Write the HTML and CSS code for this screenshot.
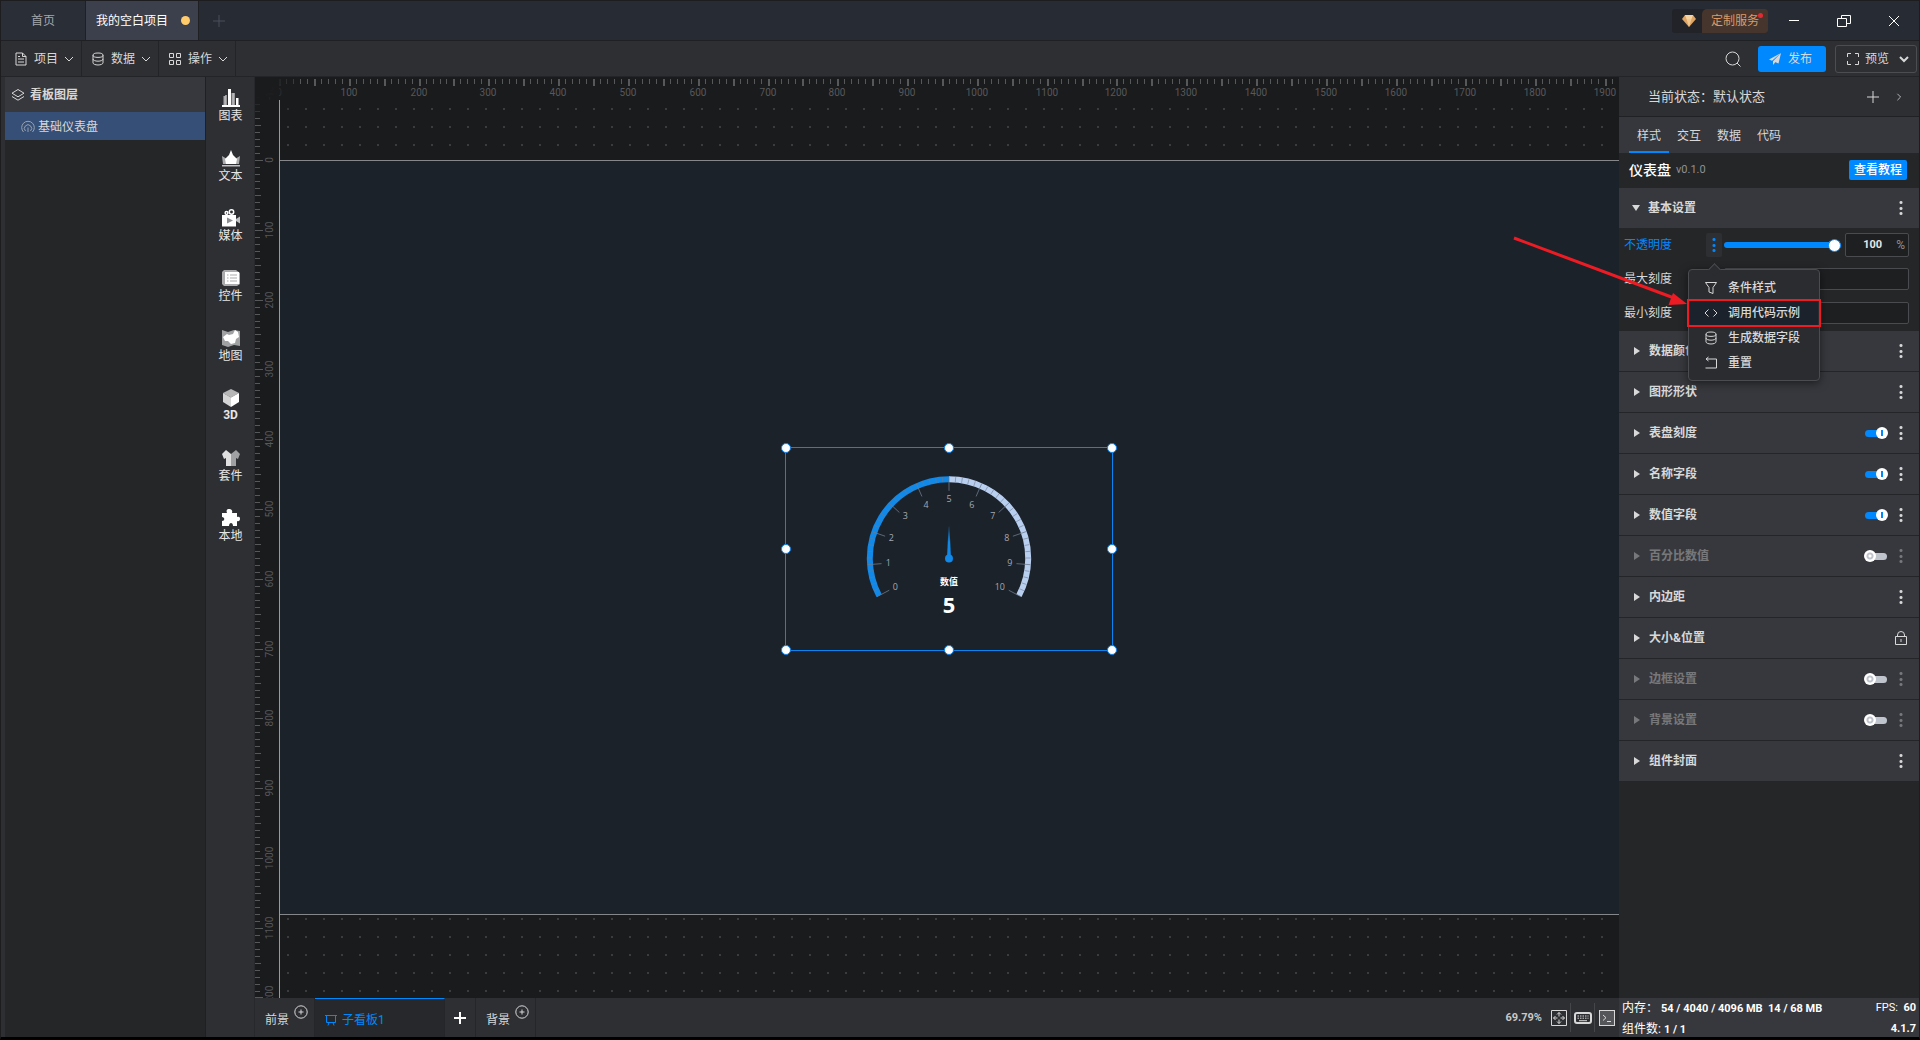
FILE: index.html
```html
<!DOCTYPE html>
<html lang="zh-CN">
  <head>
    <meta charset="utf-8" />
    <title>我的空白项目</title>
    <link rel="stylesheet" href="styles.css">
  </head>
  <body>
    <svg class="defs" aria-hidden="true">
      <symbol id="i-plus" viewBox="0 0 14 14"><path d="M7 1v12M1 7h12" /></symbol>
      <symbol id="i-down" viewBox="0 0 10 10"><path d="M1 3l4 4 4-4" /></symbol>
      <symbol id="i-right" viewBox="0 0 10 10"><path d="M3 1l4 4-4 4" /></symbol>
      <symbol id="i-db" viewBox="0 0 14 14"><ellipse cx="7" cy="3.2" rx="5" ry="2.2" /><path d="M2 3.2v7.6c0 1.2 2.2 2.2 5 2.2s5-1 5-2.2V3.2M2 7c0 1.2 2.2 2.2 5 2.2S12 8.2 12 7" /></symbol>
      <symbol id="i-addround" viewBox="0 0 14 14"><circle cx="7" cy="7" r="6.2" /><path d="M7 4.5v5M4.5 7h5" /></symbol>
    </svg>

    <div class="app">
      <header class="titlebar">
        <button class="tab">首页</button>
        <button class="tab active">我的空白项目<i class="unsaved"></i></button>
        <button class="tab-add" aria-label="新建"><svg class="icon-14"><use href="#i-plus" /></svg></button>
        <div class="spacer"></div>
        <button class="service">
          <span class="gem">
            <svg width="14" height="12" viewBox="0 0 14 12"><path d="M3 0h8l3 4-7 8-7-8z" fill="#e0a463" /><path d="M3 0h8l-1.5 4h-5z" fill="#f7d3a0" /><path d="M4.5 4h5L7 12z" fill="#f3c990" /></svg>
          </span>
          <span class="service-text">定制服务</span>
          <i class="dot"></i>
        </button>
        <button class="win" aria-label="最小化"><svg class="icon-14" viewBox="0 0 14 14"><path d="M2 6.5h10" /></svg></button>
        <button class="win" aria-label="还原"><svg class="icon-14" viewBox="0 0 14 14"><path d="M.5 4.5h9v8h-9zM4.5 4.5v-3h9v8h-4" /></svg></button>
        <button class="win" aria-label="关闭"><svg class="icon-14" viewBox="0 0 14 14"><path d="M2 2l10 10M12 2L2 12" /></svg></button>
      </header>

      <nav class="toolbar">
        <button class="tool"><svg class="icon-14" viewBox="0 0 14 14"><path d="M2 1h6.5L12 4.5V13H2zM8.5 1v3.5H12M4 7h6M4 10h6M4 4.5h2" /></svg>项目<svg class="icon-10"><use href="#i-down" /></svg></button>
        <button class="tool"><svg class="icon-14"><use href="#i-db" /></svg>数据<svg class="icon-10"><use href="#i-down" /></svg></button>
        <button class="tool"><svg class="icon-14" viewBox="0 0 14 14"><path d="M1.5 1.5h4v4h-4zM8.5 1.5h4v4h-4zM1.5 8.5h4v4h-4zM8.5 8.5h4v4h-4z" /></svg>操作<svg class="icon-10"><use href="#i-down" /></svg></button>
        <div class="spacer"></div>
        <button class="search" aria-label="搜索"><svg width="16" height="16" viewBox="0 0 16 16"><circle cx="7.5" cy="7.5" r="6.5" /><path d="M12 12l3.5 3.5" /></svg></button>
        <button class="publish"><svg width="12" height="12" viewBox="0 0 12 12"><path d="M12 0L0 6.5l3 1.3zM12 0L4 8.3V12l2-2.5zM12 0L6 9l3.5 1.5z" /></svg>发布</button>
        <button class="preview"><svg width="12" height="12" viewBox="0 0 12 12"><path d="M4 .5H.5V4M8 .5h3.5V4M.5 8v3.5H4M8 11.5h3.5V8" /></svg>预览<svg class="icon-10"><use href="#i-down" /></svg></button>
      </nav>

      <main class="workspace">
        <aside class="layers">
          <h2 class="layers-title"><svg class="icon-14" viewBox="0 0 14 14"><path d="M7 1.5l6 3.7-6 3.6-6-3.6zM1 8.5l6 3.7 6-3.7" /></svg>看板图层</h2>
          <button class="layer"><svg class="icon-14" viewBox="0 0 14 14"><path d="M2.500 12a6.300 6.300 0 1 1 9 0M4.500 11a3.600 3.600 0 1 1 5 0M7 7.500v4.500" /></svg>基础仪表盘</button>
        </aside>

        <nav class="rail">
          <button class="rail-item"><svg viewBox="0 0 18 18"><path d="M1.500 7h2v9h-2zM9.500 4h2v12h-2z" opacity=".6" /><path d="M0 16h18v2H0zM3.500 6h1v10h-1zM6 0h3v16H6zM11.500 4h1v12h-1zM14 9h2.500v7H14z" /></svg>图表</button>
          <button class="rail-item"><svg viewBox="0 0 18 18"><path d="M0 7l5 3v5H1zM18 7l-5 3v5h4z" opacity=".6" /><path d="M9 1l2 5 4 4-1 5H4l-1-5 4-4z" /><path d="M0 16h18v1.500H0z" opacity=".7" /></svg>文本</button>
          <button class="rail-item"><svg viewBox="0 0 18 18"><path d="M14 10l4-2.500v7L14 12z" opacity=".7" /><circle class="reel" cx="4.500" cy="4" r="1.400" /><circle class="reel" cx="9.500" cy="3" r="2.200" /><path d="M0 6h14v11.500H0z" /><path d="M5 8.500v6l6-3z" fill="#8d8e91" /></svg>媒体</button>
          <button class="rail-item"><svg viewBox="0 0 18 18"><path d="M2 1h12l4 3v11l-3 2H2l-2-2V3z" opacity=".6" /><path d="M3 3h14v12H3zM5 5.500v1h1.500v-1zM8 5.500v1h7v-1zM5 8.500v1h1.500v-1zM8 8.500v1h7v-1zM5 11.500v1h1.500v-1zM8 11.500v1h7v-1z" fill-rule="evenodd" /></svg>控件</button>
          <button class="rail-item"><svg viewBox="0 0 18 18"><path d="M0 1l6 2 6-2 6 1v15l-6-1-6 2-6-2z" opacity=".55" /><path d="M1 8l4-3 2 1 4-1 2-4 3 2 1 5-3 2-1 4-4 1-3-3H3z" /></svg>地图</button>
          <button class="rail-item bold"><svg viewBox="0 0 18 18"><path d="M9 0l8 4-8 4.500L1 4z" opacity=".65" /><path d="M1 4l8 4.500V18l-8-5z" opacity=".8" /><path d="M17 4L9 8.500V18l8-5z" /></svg>3D</button>
          <button class="rail-item"><svg viewBox="0 0 18 18"><path d="M4 1l5 4v12H4V9L2 10 0 5z" opacity=".85" /><path d="M14 1L9 5v12h5V9l2 1 2-5z" opacity=".55" /></svg>套件</button>
          <button class="rail-item"><svg viewBox="0 0 18 18"><path d="M0 4h5C4 1 5 0 7 0s4 1 3 4h5v4c3-1 3 1 3 2s-1 3-3 2v5h-4c0-4-4-4-4 0H0v-5c3 0 3-4 0-4z" /></svg>本地</button>
        </nav>

        <section class="center">
          <div class="stage">
            <div class="artboard"></div>
            <svg class="ruler ruler-x" id="rulerX"></svg>
            <svg class="ruler ruler-y" id="rulerY"></svg>
            <div class="corner"></div>
            <div class="axis"></div>
            <div class="widget">
              <svg class="gauge" id="gauge" viewBox="0 0 326 203">
                <defs>
                  <linearGradient id="needle" x1="0" y1="0" x2="0" y2="1">
                    <stop offset="0" stop-color="#1089e9" stop-opacity=".2" />
                    <stop offset="0.5" stop-color="#1089e9" />
                  </linearGradient>
                </defs>
              </svg>
              <i class="handle nw"></i><i class="handle n"></i><i class="handle ne"></i>
              <i class="handle w"></i><i class="handle e"></i>
              <i class="handle sw"></i><i class="handle s"></i><i class="handle se"></i>
            </div>
          </div>
          <footer class="boards">
            <button class="board">前景<svg class="icon-14 raised"><use href="#i-addround" /></svg></button>
            <button class="board current"><svg width="12" height="12" viewBox="0 0 12 12"><path d="M0 1.500h12M1.500 1.500v7h9v-7M4 8.500L3 11.500M8 8.500l1 3" /></svg>子看板1</button>
            <button class="board add" aria-label="添加"><svg class="icon-14"><use href="#i-plus" /></svg></button>
            <button class="board">背景<svg class="icon-14 raised"><use href="#i-addround" /></svg></button>
            <div class="spacer"></div>
            <span class="zoom num">69.79%</span>
            <button class="view" aria-label="适应"><svg width="16" height="16" viewBox="0 0 16 16"><path d="M.5.5h15v15H.5zM8 2.500v4M8 9.500v4M2.500 8h4M9.500 8h4M6 4.500l2-2 2 2M6 11.500l2 2 2-2M4.500 6l-2 2 2 2M11.500 6l2 2-2 2" /></svg></button>
            <button class="view" aria-label="键盘"><svg width="18" height="12" viewBox="0 0 18 12"><rect class="thick" x="1" y="1" width="16" height="10" rx="2" /><path d="M3.500 4h11M3.500 6.200h11" stroke-dasharray="1.500 1" /><path d="M5 8.700h8" /></svg></button>
            <button class="view" aria-label="控制台"><svg width="16" height="16" viewBox="0 0 16 16"><rect x=".5" y=".5" width="15" height="15" fill="#55565a" /><path d="M4 5l3 2.700L4 10.500M8 11.500h4" /></svg></button>
          </footer>
        </section>

        <aside class="inspector">
          <div class="state">
            <span>当前状态：默认状态</span>
            <button aria-label="添加状态"><svg class="icon-14"><use href="#i-plus" /></svg></button>
            <button aria-label="展开"><svg class="icon-8"><use href="#i-right" /></svg></button>
          </div>
          <nav class="tabs">
            <button class="active">样式</button>
            <button>交互</button>
            <button>数据</button>
            <button>代码</button>
          </nav>
          <div class="component">
            <h3>仪表盘</h3>
            <span class="version num">v0.1.0</span>
            <button class="tutorial">查看教程</button>
          </div>
          <div class="section open"><button class="fold">基本设置</button><button class="more" aria-label="更多"></button></div>
          <div class="fields">
            <div class="field">
              <label class="blue" for="opacity">不透明度</label>
              <button class="more blue" aria-label="更多"></button>
              <input type="range" id="opacity" min="0" max="100" value="100" />
              <span class="percent"><input type="text" class="num" value="100" aria-label="不透明度" />%</span>
            </div>
            <div class="field">
              <label for="max">最大刻度</label>
              <input type="text" class="text" id="max" />
            </div>
            <div class="field">
              <label for="min">最小刻度</label>
              <input type="text" class="text" id="min" />
            </div>

            <div class="menu">
              <button class="menu-item"><svg class="icon-14" viewBox="0 0 14 14"><path d="M1.500 1.500h11L9 6.500v6l-4-1.500V6.500z" /></svg>条件样式</button>
              <button class="menu-item hover"><svg class="icon-14" viewBox="0 0 14 14"><path d="M4.500 3.500L1 7l3.500 3.500M9.500 3.500L13 7l-3.500 3.500" /></svg>调用代码示例</button>
              <button class="menu-item"><svg class="icon-14"><use href="#i-db" /></svg>生成数据字段</button>
              <button class="menu-item"><svg class="icon-14" viewBox="0 0 14 14"><path d="M1.500 12h11V3H2M4.500 1L2 3l2.500 2" /></svg>重置</button>
              <div class="mark"></div>
              <svg class="arrow" width="176" height="76" viewBox="0 0 176 76"><path d="M2 4L162 64" /><path class="head" d="M175 70l-18.500 1 4.500-12z" /></svg>
            </div>
          </div>
          <div class="section"><button class="fold">数据颜色</button><button class="more" aria-label="更多"></button></div>
          <div class="section"><button class="fold">图形形状</button><button class="more" aria-label="更多"></button></div>
          <div class="section"><button class="fold">表盘刻度</button><input type="checkbox" class="switch" aria-label="表盘刻度" checked /><button class="more" aria-label="更多"></button></div>
          <div class="section"><button class="fold">名称字段</button><input type="checkbox" class="switch" aria-label="名称字段" checked /><button class="more" aria-label="更多"></button></div>
          <div class="section"><button class="fold">数值字段</button><input type="checkbox" class="switch" aria-label="数值字段" checked /><button class="more" aria-label="更多"></button></div>
          <div class="section off"><button class="fold">百分比数值</button><input type="checkbox" class="switch" aria-label="百分比数值" /><button class="more" aria-label="更多"></button></div>
          <div class="section"><button class="fold">内边距</button><button class="more" aria-label="更多"></button></div>
          <div class="section"><button class="fold">大小&amp;位置</button><button class="lock" aria-label="锁定"><svg width="12" height="14" viewBox="0 0 12 14"><path d="M.5 5.500h11v8H.5zM2.500 5.500V4a3.500 3.500 0 0 1 7 0v1.500M6 8v3" /></svg></button></div>
          <div class="section off"><button class="fold">边框设置</button><input type="checkbox" class="switch" aria-label="边框设置" /><button class="more" aria-label="更多"></button></div>
          <div class="section off"><button class="fold">背景设置</button><input type="checkbox" class="switch" aria-label="背景设置" /><button class="more" aria-label="更多"></button></div>
          <div class="section"><button class="fold">组件封面</button><button class="more" aria-label="更多"></button></div>
          <div class="spacer"></div>
          <div class="stats">
            <div class="stat-row"><span>内存： <b class="num">54 / 4040 / 4096 MB&nbsp; 14 / 68 MB</b></span><span class="num">FPS:&nbsp; <b>60</b></span></div>
            <div class="stat-row"><span>组件数: <b class="num">1 / 1</b></span><b class="num">4.1.7</b></div>
          </div>
        </aside>
      </main>
    </div>

    <script src="script.js"></script>
  </body>
</html>
```

FILE: styles.css
```css
* {
  box-sizing: border-box;
}

body {
  margin: 0;
  background: #000;
  color: #d8d8d8;
  font-family: Roboto, "Noto Sans CJK SC", sans-serif;
  font-size: 12px;
  line-height: 16px;
  user-select: none;
}

button,
input {
  font: inherit;
  color: inherit;
  margin: 0;
  padding: 0;
  border: none;
  background: none;
}

h2,
h3 {
  margin: 0;
}

svg {
  display: block;
  flex: none;
  fill: none;
  stroke: currentColor;
  stroke-width: 1;
}

.defs {
  display: none;
}

.num {
  font-size: 11px;
}

.icon-14 {
  width: 14px;
  height: 14px;
}

.icon-10 {
  width: 10px;
  height: 10px;
}

.icon-8 {
  width: 8px;
  height: 8px;
}

.spacer {
  flex: 1;
}

.app {
  display: flex;
  flex-direction: column;
  height: 100vh;
  border: 1px solid #1d1d1f;
  border-bottom: 3px solid #000;
  background: #2e2f33;
}

/* title bar */
.titlebar {
  display: flex;
  height: 40px;
  background: #272b34;
  border-bottom: 1px solid #1f2023;
}

.tab {
  display: flex;
  align-items: center;
  padding: 0 30px;
  background: #2a2e37;
  color: #a5a7ab;
  border-right: 1px solid #1f2023;
}

.tab.active {
  gap: 13px;
  padding: 0 8px 0 10px;
  background: #3c404c;
  color: #fff;
}

.unsaved {
  width: 9px;
  height: 9px;
  border-radius: 50%;
  background: #ffcb6b;
}

.tab-add {
  padding: 0 13px;
  color: #4b4f58;
}

.service {
  position: relative;
  display: flex;
  align-self: center;
  height: 24px;
  margin-right: 1px;
  border-radius: 3px;
  background: #222329;
}

.gem {
  display: grid;
  place-items: center;
  width: 30px;
  padding-left: 4px;
}

.gem svg {
  stroke: none;
}

.service-text {
  padding: 4px 9px;
  border-radius: 5px 3px 3px 0;
  background: #45352d;
  color: #dc9a68;
}

.dot {
  position: absolute;
  top: 4px;
  right: 5px;
  width: 5px;
  height: 5px;
  border-radius: 50%;
  background: #e02b35;
}

.win {
  display: grid;
  place-items: center;
  width: 50px;
  color: #fff;
}

/* toolbar */
.toolbar {
  display: flex;
  align-items: center;
  height: 36px;
  padding-right: 2px;
  border-bottom: 1px solid #232427;
}

.tool {
  display: flex;
  align-items: center;
  gap: 6px;
  height: 100%;
  padding: 0 7px 0 9px;
  border-right: 1px solid #232427;
}

.tool:first-child {
  padding-left: 13px;
}

.search {
  margin-right: 17px;
}

.publish,
.preview {
  display: flex;
  align-items: center;
  gap: 7px;
  padding-left: 11px;
  border-radius: 3px;
}

.publish {
  width: 68px;
  height: 26px;
  margin-right: 9px;
  background: #0088ff;
}

.publish svg {
  fill: currentColor;
  stroke: none;
}

.preview {
  width: 82px;
  height: 28px;
  gap: 6px;
  border: 1px solid #4c4d51;
}

.preview .icon-10 {
  margin-left: 4px;
  stroke-width: 2;
}

.workspace {
  display: flex;
  flex: 1;
  min-height: 0;
}

/* layers */
.layers {
  width: 201px;
  margin-left: 4px;
  background: #252628;
  border-right: 1px solid #1f2022;
}

.layers-title {
  display: flex;
  align-items: center;
  gap: 5px;
  height: 35px;
  padding-left: 6px;
  background: #37383d;
  font-size: 12px;
  font-weight: 700;
}

.layer {
  display: flex;
  align-items: center;
  gap: 3px;
  width: 100%;
  height: 28px;
  padding-top: 1px;
  padding-left: 16px;
  background: #364f76;
}

.layer svg {
  opacity: 0.6;
}

.rail {
  width: 49px;
  padding-top: 12px;
  padding-left: 1px;
  border-right: 1px solid #27282b;
}

.rail-item {
  display: flex;
  flex-direction: column;
  align-items: center;
  gap: 1px;
  width: 100%;
  height: 60px;
  color: #e6e6e6;
}

.rail-item.bold {
  gap: 0;
  font-weight: 700;
}

.rail-item svg {
  width: 18px;
  height: 18px;
  fill: #fff;
  stroke: none;
}

.rail-item .reel {
  fill: none;
  stroke: #fff;
  stroke-width: 1.5;
}

/* canvas */
.center {
  display: flex;
  flex: 1;
  flex-direction: column;
  min-width: 0;
}

.stage {
  position: relative;
  flex: 1;
  overflow: hidden;
  background: radial-gradient(#3a3c40 1px, transparent 1px) 24px 23px / 18px 18px #1a1b1d;
}

.stage::before {
  content: "";
  position: absolute;
  inset: 0 0 auto;
  height: 27px;
  background: #1a1b1d;
}

.artboard {
  position: absolute;
  top: 83px;
  left: 24px;
  right: 0;
  height: 755px;
  border: 1px solid #85878a;
  border-width: 1px 0;
  background: #1b222a;
}

.axis {
  position: absolute;
  top: 23px;
  bottom: 0;
  left: 24px;
  width: 1px;
  background: #98999b;
}

.ruler {
  position: absolute;
  top: 0;
  left: 0;
  stroke: none;
  fill: #57585a;
  font-size: 10px;
}

.ruler-x {
  width: 100%;
  height: 27px;
}

.ruler-y {
  width: 24px;
  height: 100%;
  background: #1a1b1d;
}

.corner {
  position: absolute;
  top: 0;
  left: 0;
  width: 40px;
  height: 40px;
  background: radial-gradient(circle at 0 0, #1a1b1d 35%, transparent);
}

.widget {
  position: absolute;
  top: 370px;
  left: 530px;
  width: 328px;
  height: 204px;
  border: 1px solid #0a84f0;
}

.gauge {
  width: 100%;
  height: 100%;
}

.gauge text {
  stroke: none;
  fill: #a3a9b3;
  font-family: "Open Sans", "Noto Sans CJK SC", sans-serif;
  font-size: 9px;
  text-anchor: middle;
}

.gauge .name,
.gauge .value {
  fill: #fff;
  font-weight: 700;
}

.gauge .value {
  font-size: 22px;
}

.handle {
  position: absolute;
  width: 10px;
  height: 10px;
  margin: -5px;
  border: 1px solid #0a84f0;
  border-radius: 50%;
  background: #fff;
}

.nw { top: 0; left: 0; }
.n { top: 0; left: 50%; }
.ne { top: 0; left: 100%; }
.w { top: 50%; left: 0; }
.e { top: 50%; left: 100%; }
.sw { top: 100%; left: 0; }
.s { top: 100%; left: 50%; }
.se { top: 100%; left: 100%; }

/* boards bar */
.boards {
  display: flex;
  height: 39px;
}

.board {
  display: flex;
  align-items: center;
  gap: 5px;
  padding: 4px 6px 0 10px;
  border-right: 1px solid #252629;
}

.raised {
  margin-bottom: 16px;
}

.board.current {
  width: 130px;
  border-top: 1px solid #0088ff;
  background: #27282c;
  color: #0088ff;
}

.board.add {
  padding: 0 8px;
  color: #fff;
}

.board.add svg {
  stroke-width: 2;
}

.zoom {
  align-self: center;
  margin-right: 5px;
  font-weight: 700;
  color: #c8c8c8;
}

.view {
  display: grid;
  place-items: center;
  width: 24px;
  margin: 5px 0;
  border-right: 1px solid #45464a;
}

.view:last-child {
  border: none;
}

.view .thick {
  stroke-width: 2;
}

/* inspector */
.inspector {
  display: flex;
  flex-direction: column;
  width: 300px;
  background: #252628;
}

.state {
  display: flex;
  align-items: center;
  gap: 15px;
  height: 40px;
  padding: 0 16px 0 29px;
  background: #2e2f33;
  border-bottom: 1px solid #202124;
  font-size: 13px;
}

.state span {
  flex: 1;
}

.tabs {
  display: flex;
  height: 36px;
  padding-left: 10px;
  background: #36373c;
}

.tabs button {
  width: 40px;
  padding-top: 4px;
  border-bottom: 2px solid transparent;
}

.tabs .active {
  border-color: #0088ff;
}

.component {
  display: flex;
  align-items: center;
  height: 35px;
  padding: 0 12px 2px 10px;
}

.component h3 {
  font-size: 14px;
  font-weight: 500;
  color: #fff;
}

.version {
  flex: 1;
  margin-left: 5px;
  color: #909195;
}

.tutorial {
  width: 58px;
  height: 20px;
  border-radius: 2px;
  background: #0088ff;
  color: #fff;
  font-weight: 500;
}

.section {
  display: flex;
  align-items: center;
  height: 41px;
  padding-right: 10px;
  background: #37383d;
  border-bottom: 1px solid #242528;
}

.section.open {
  height: 40px;
  border: none;
}

.fold {
  display: flex;
  flex: 1;
  align-items: center;
  gap: 9px;
  height: 100%;
  padding-left: 15px;
  font-weight: 700;
}

.fold::before {
  content: "";
  border: 4px solid transparent;
  border-left: 6px solid #d8d8d8;
  border-right: 0;
}

.open .fold {
  gap: 8px;
  padding-left: 13px;
}

.open .fold::before {
  border: 4px solid transparent;
  border-top: 6px solid #d8d8d8;
  border-bottom: 0;
}

.off .fold,
.off .more {
  opacity: 0.4;
}

.more {
  width: 16px;
  height: 24px;
  background: radial-gradient(circle, currentColor 1px, transparent 2px) center / 6px 5px no-repeat,
    radial-gradient(circle, currentColor 1px, transparent 2px) center 4px / 6px 5px no-repeat,
    radial-gradient(circle, currentColor 1px, transparent 2px) center 15px / 6px 5px no-repeat;
}

.lock {
  padding: 0 2px;
}

.switch {
  position: relative;
  appearance: none;
  width: 22px;
  height: 7px;
  margin-right: 6px;
  border-radius: 4px;
  background: #c0c4cc;
}

.switch::after {
  content: "";
  position: absolute;
  top: -3px;
  left: -1px;
  width: 12px;
  height: 12px;
  border-radius: 50%;
  background: radial-gradient(circle, #fff 1px, #c0c4cc 2px, #c0c4cc 3px, #fff 4px);
}

.switch:checked {
  background: #0088ff;
}

.switch:checked::after {
  left: 11px;
  background: linear-gradient(#0088ff, #0088ff) center / 2px 6px no-repeat #fff;
}

.fields {
  position: relative;
  display: flex;
  flex-direction: column;
  gap: 10px;
  height: 103px;
  padding: 5px 10px 0 5px;
}

.field {
  display: flex;
  align-items: center;
  height: 24px;
}

.field label {
  width: 82px;
}

.blue {
  color: #0088ff;
}

.field .more {
  border-radius: 2px;
  background-color: #2e2f33;
}

.field input[type="range"] {
  appearance: none;
  flex: 1;
  min-width: 0;
  height: 12px;
  margin: 0 4px 0 2px;
}

input[type="range"]::-webkit-slider-runnable-track {
  height: 6px;
  border-radius: 3px;
  background: #0088ff;
}

input[type="range"]::-webkit-slider-thumb {
  appearance: none;
  width: 13px;
  height: 13px;
  margin-top: -3px;
  border: 1px solid #0088ff;
  border-radius: 50%;
  background: #fff;
}

.percent,
.text {
  border: 1px solid #4a4b4e;
  border-radius: 2px;
  background: #1e1f21;
}

.percent {
  display: flex;
  align-items: center;
  width: 64px;
  height: 24px;
  padding-right: 3px;
  color: #909195;
}

.percent input {
  flex: 1;
  min-width: 0;
  padding-left: 3px;
  text-align: center;
  font-weight: 700;
  color: #e6e6e6;
}

.text {
  flex: 1;
  margin-left: 18px;
  height: 22px;
}

/* context menu */
.menu {
  position: absolute;
  top: 41px;
  left: 69px;
  z-index: 2;
  width: 132px;
  padding: 5px 1px;
  border: 1px solid #4b4c50;
  border-radius: 4px;
  background: #2b2c30;
  box-shadow: 0 2px 8px rgba(0, 0, 0, 0.5);
}

.menu::before {
  content: "";
  position: absolute;
  top: -5px;
  left: 21px;
  width: 8px;
  height: 8px;
  border: 1px solid #4b4c50;
  border-width: 1px 0 0 1px;
  background: #2b2c30;
  transform: rotate(45deg);
}

.menu-item {
  display: flex;
  align-items: center;
  gap: 10px;
  width: 100%;
  height: 25px;
  padding-left: 14px;
  font-weight: 500;
}

.menu-item.hover {
  background: #1b222b;
}

.mark {
  position: absolute;
  top: 29px;
  left: -2px;
  width: 134px;
  height: 28px;
  border: 2px solid #ed1c24;
}

.arrow {
  position: absolute;
  top: -36px;
  left: -177px;
  stroke: #ed1c24;
  stroke-width: 3;
  pointer-events: none;
}

.arrow .head {
  fill: #ed1c24;
  stroke: none;
}

/* stats */
.stats {
  height: 39px;
  padding: 0 3px;
  background: #37383d;
  color: #fff;
}

.stat-row {
  display: flex;
  justify-content: space-between;
  line-height: 20px;
  white-space: nowrap;
}
```

FILE: script.js
```js
const SCALE = 0.6979;
const NS = "http://www.w3.org/2000/svg";

function add(parent, tag, attrs, text) {
  const el = document.createElementNS(NS, tag);
  for (const key in attrs) el.setAttribute(key, attrs[key]);
  if (text !== undefined) el.textContent = text;
  parent.appendChild(el);
}

function drawRulers() {
  const rulerX = document.getElementById("rulerX");
  const rulerY = document.getElementById("rulerY");
  const stage = document.querySelector(".stage");
  const maxX = (stage.clientWidth - 24) / SCALE;
  const maxY = (stage.clientHeight - 83) / SCALE;

  for (let v = 0; v <= maxX; v += 10) {
    const x = Math.round(24 + v * SCALE);
    const major = v % 50 === 0;
    add(rulerX, "rect", { x, y: 2, width: major ? 2 : 1, height: major ? 7 : 5 });
    if (v % 100 === 0) add(rulerX, "text", { x, y: 19, "text-anchor": "middle" }, v);
  }

  for (let v = -90; v <= maxY; v += 10) {
    const y = Math.round(83 + v * SCALE);
    const width = v % 100 === 0 ? 8 : v % 50 === 0 ? 6 : 5;
    add(rulerY, "rect", { x: 0, y, width, height: 1 });
  }
  for (let v = -100; v <= maxY; v += 100) {
    const y = Math.round(83 + v * SCALE);
    add(rulerY, "text", { transform: `translate(18 ${y}) rotate(-90)`, "text-anchor": "middle" }, v);
  }
}

function drawGauge() {
  const gauge = document.getElementById("gauge");
  const cx = 163;
  const cy = 111;
  const point = (r, value) => {
    const a = ((208 - value * 23.6) * Math.PI) / 180;
    return [cx + r * Math.cos(a), cy - r * Math.sin(a)];
  };
  const arc = (from, to, color) => {
    add(gauge, "path", {
      d: `M${point(79.6, from)} A79.6 79.6 0 0 1 ${point(79.6, to)}`,
      stroke: color,
      "stroke-width": 6,
    });
  };
  arc(0, 5, "#1089e9");
  arc(5, 10, "#b9cff0");

  for (let i = 0; i <= 50; i++) {
    const inner = i % 5 === 0 ? 68 : 77;
    add(gauge, "path", {
      d: `M${point(82, i / 5)} L${point(inner, i / 5)}`,
      stroke: "#6e7a8c",
      "stroke-width": i % 5 === 0 ? 0.8 : 0.6,
    });
  }

  const labels = [[109, 143], [102, 119], [105, 93], [119, 71], [140, 60], [163, 54], [186, 60], [207, 71], [221, 93], [224, 119], [214, 143]];
  labels.forEach(([x, y], i) => add(gauge, "text", { x, y }, i));

  add(gauge, "path", { d: "M162.500 79H163.500L165 111H161Z", fill: "url(#needle)", stroke: "none" });
  add(gauge, "circle", { cx, cy, r: 4, fill: "#1089e9", stroke: "none" });
  add(gauge, "text", { x: 163, y: 138, class: "name" }, "数值");
  add(gauge, "text", { x: 163, y: 166, class: "value" }, 5);
}

drawRulers();
drawGauge();
```
